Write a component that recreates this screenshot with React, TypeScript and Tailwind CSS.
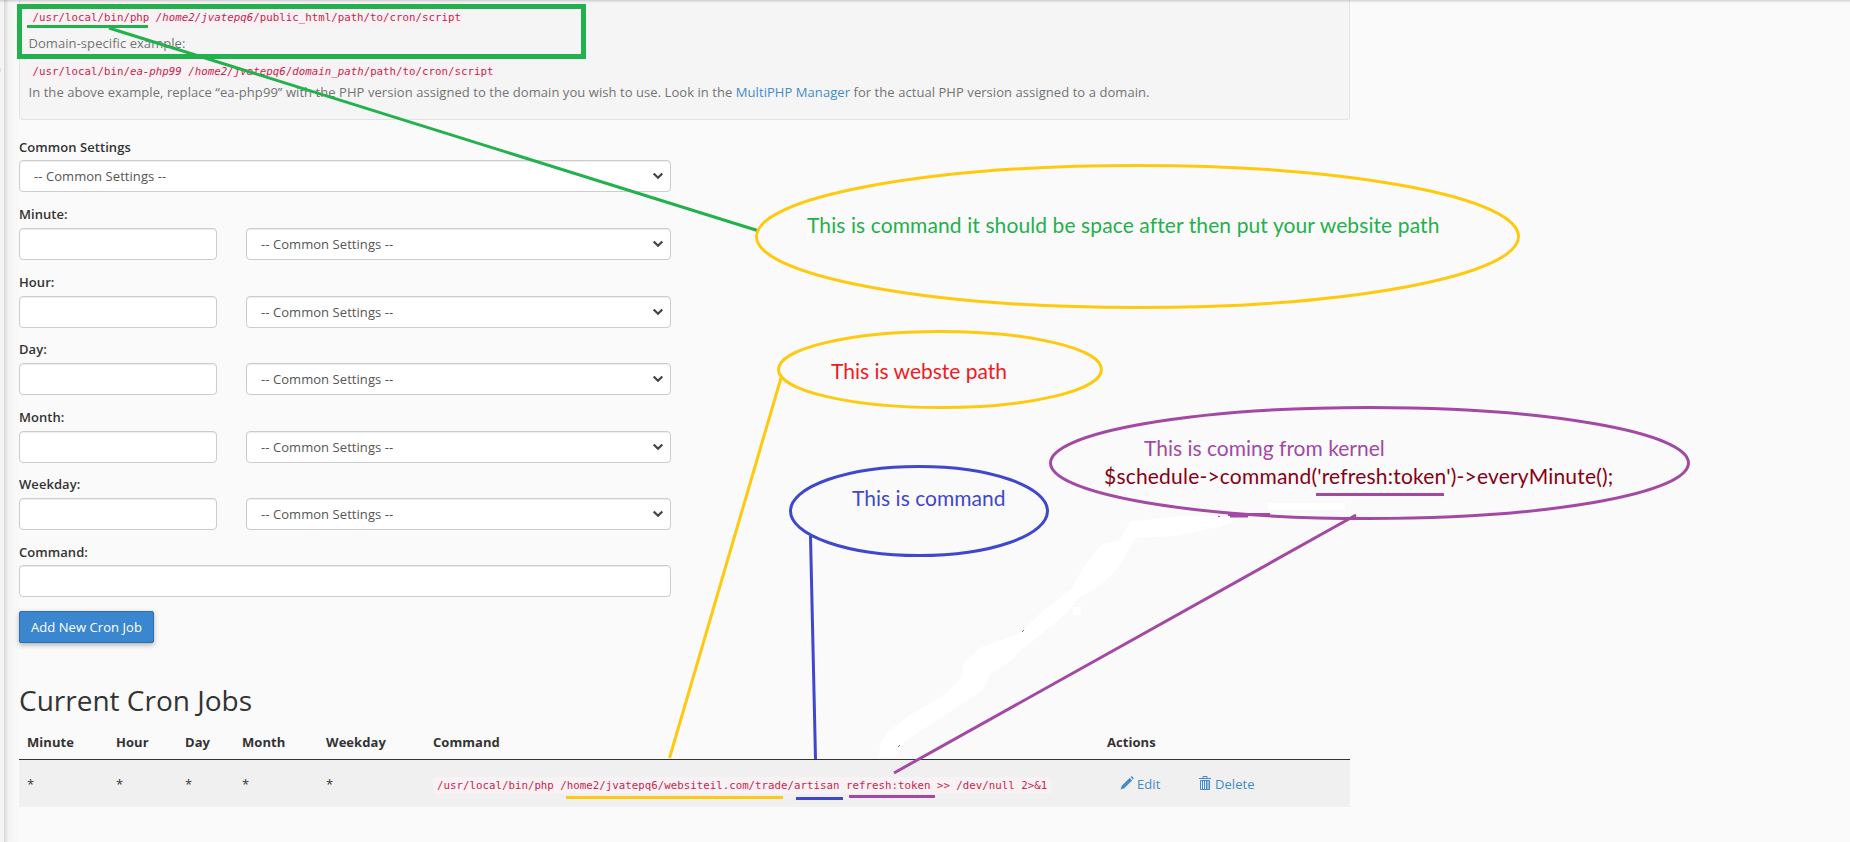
import React from 'react';

const fields = ['Minute:', 'Hour:', 'Day:', 'Month:', 'Weekday:'];

function Chevron() {
  return (
    <svg className="h-[10px] w-[12px]" viewBox="0 0 12 10" fill="none" stroke="#444" strokeWidth="2.2">
      <path d="M1.7 2.5 L6 6.8 L10.3 2.5" />
    </svg>
  );
}

function Select({ className }: { className: string }) {
  return (
    <div className={`flex h-8 items-center justify-between rounded border border-[#ccc] bg-white pr-[6px] text-[#555] shadow-[inset_0_1px_1px_rgba(0,0,0,0.075)] ${className}`}>
      <span>-- Common Settings --</span>
      <Chevron />
    </div>
  );
}

const inputClass = 'block h-8 rounded border border-[#ccc] bg-white shadow-[inset_0_1px_1px_rgba(0,0,0,0.075)] outline-none';
const codeClass = "rounded bg-[#f9f2f4] px-1 py-[2px] font-['DejaVu_Sans_Mono',monospace] text-[10.75px] leading-[15px] tracking-[0.02px] text-[#c7254e] whitespace-pre";
const noteClass = "absolute whitespace-pre font-[Lato,sans-serif] text-[21px] leading-[26px]";

export default function App() {
  return (
    <div className="relative flex h-[842px] w-[1850px] overflow-hidden bg-[#fafafa] font-['Open_Sans',sans-serif] text-[13px] leading-[18px] tracking-[0.06px] text-[#333]">
      <div className="w-1 shrink-0 bg-[#f5f5f5] pt-[68px]">
        <div className="h-1 w-px bg-[#ddd]" />
      </div>
      <div className="w-[15px] shrink-0 bg-gradient-to-r from-[#d8d8d8] via-[#f3f3f3] via-30% to-[#fafafa]" />
      <main className="w-[1331px] shrink-0">
        <section className="flex h-[120px] flex-col items-start rounded-b border border-t-0 border-[#e3e3e3] bg-[#f5f5f5] pl-[8.5px] text-[#737373]">
          <code className={`mt-[8px] ${codeClass}`}>/usr/local/bin/php <em>/home2/jvatepq6</em>/public_html/path/to/cron/script</code>
          <p className="mt-[7px]">Domain-specific example:</p>
          <code className={`mt-[10px] ${codeClass}`}>/usr/local/bin/<em>ea-php99</em> <em>/home2/jvatepq6</em>/<em>domain_path</em>/path/to/cron/script</code>
          <p className="mt-[2px]">
            In the above example, replace “ea-php99” with the PHP version assigned to the domain you wish to use. Look in the <a className="text-[#428bca]">MultiPHP Manager</a> for the actual PHP version assigned to a domain.
          </p>
        </section>

        <form className="w-[652px]">
          <label className="mt-[18px] mb-1 block font-semibold">Common Settings</label>
          <Select className="w-full pl-[14px]" />
          {fields.map((f) => (
            <div key={f} className="h-[67.5px] pt-[13px]">
              <label className="mb-[5px] block font-semibold">{f}</label>
              <div className="flex justify-between">
                <input className={`${inputClass} w-[198px]`} />
                <Select className="w-[425px] pl-[14px]" />
              </div>
            </div>
          ))}
          <label className="mt-[13.5px] mb-1 block font-semibold">Command:</label>
          <input className={`${inputClass} w-full`} />
          <button type="button" className="mt-[14px] block h-8 w-[135px] rounded-[2px] border border-[#2a6db0] bg-[#3a87cf] text-white shadow-[0_2px_5px_rgba(0,0,0,0.3)]">Add New Cron Job</button>
        </form>

        <h2 className="mt-[38px] text-[28px] leading-[38px] tracking-normal">Current Cron Jobs</h2>
        <table className="mt-[6px] w-full table-fixed border-collapse text-left">
          <colgroup>
            <col className="w-[89px]" /><col className="w-[69px]" /><col className="w-[57px]" /><col className="w-[84px]" />
            <col className="w-[107px]" /><col className="w-[674px]" /><col />
          </colgroup>
          <thead>
            <tr className="h-[34px] border-b border-[#333]">
              {['Minute', 'Hour', 'Day', 'Month', 'Weekday', 'Command', 'Actions'].map((h) => (
                <th key={h} className="pl-2 font-bold">{h}</th>
              ))}
            </tr>
          </thead>
          <tbody>
            <tr className="h-[48px] bg-[#f0f0f0]">
              {[0, 1, 2, 3, 4].map((i) => <td key={i} className="pt-[2px] pl-2">*</td>)}
              <td className="pt-[2px] pl-2"><code className={codeClass}>/usr/local/bin/php /home2/jvatepq6/websiteil.com/trade/artisan refresh:token &gt;&gt; /dev/null 2&gt;&amp;1</code></td>
              <td className="pt-[2px] pl-[21px] text-[#428bca]">
                <div className="flex items-center">
                  <svg className="mr-[3px] mb-[3px] size-[14px]" viewBox="0 0 14 14" fill="currentColor">
                    <path d="M9.6 1.9L12.1 4.4L4.2 12.2L.5 13.5L1.8 9.8ZM10.4 1.1L11.2.4Q11.7 0 12.2.5L13.5 1.8Q14 2.3 13.5 2.8L12.8 3.5Z" />
                  </svg>
                  <span className="w-[62px]">Edit</span>
                  <svg className="mr-1 mb-[3px] h-[14px] w-[12px]" viewBox="0 0 12 14" fill="none" stroke="currentColor">
                    <path d="M0 2.5H12M4 2V.5H8V2M1.5 4.5V13.5H10.5V4.5ZM3.5 5V13M5.5 5V13M7.5 5V13M9 5V13" />
                  </svg>
                  <span>Delete</span>
                </div>
              </td>
            </tr>
          </tbody>
        </table>
      </main>

      <div className="absolute inset-x-0 top-0 h-[3px] bg-gradient-to-b from-black/15 to-transparent" />

      <svg className="pointer-events-none absolute inset-0" width="1850" height="842" fill="none" strokeWidth="3">
        <g fill="#fff">
          <path d="M879 757 L880 744 L889 731 L912 714 L947 693 L961 678 L964 662 L980 648 L1020 633 L1043 611 L1072 588 L1084 566 L1102 544 L1119 541 L1130 522 L1180 516 L1231 516 L1232 523 L1200 531 L1175 536 L1135 538 L1118 568 L1107 579 L1098 587 L1078 598 L1066 614 L1040 635 L1020 651 L1012 660 L990 674 L982 691 L960 705 L930 725 L905 741 L895 757Z" />
          <path d="M1073 607H1081V615H1073ZM1268 503H1345V510H1268Z" />
        </g>
        <rect x="19.5" y="6.5" width="564" height="50" stroke="#22b14c" strokeWidth="5" />
        <path d="M27 26.5H148M109 28L759 231" stroke="#22b14c" />
        <g stroke="#ffc90e">
          <ellipse cx="1137.5" cy="236.5" rx="381" ry="71" />
          <ellipse cx="940" cy="369.5" rx="161.5" ry="38" />
          <path d="M781 378L669.5 758M566 797.5H783" />
        </g>
        <g stroke="#3f48cc">
          <ellipse cx="919" cy="511" rx="128.5" ry="44.5" />
          <path d="M810.5 536L815.5 759M796 798.5H843" />
        </g>
        <g stroke="#a349a4">
          <ellipse cx="1369.5" cy="463" rx="319" ry="55.5" />
          <path d="M1356 515L894 773M1316 494.5H1444M849 796.5H935M1228 514.5H1270M1230 516H1248" />
          <path d="M1022 632l2-2M898 747l2-2M1218 516.5h2" strokeWidth="1" />
        </g>
      </svg>
      <p className={`${noteClass} left-[807px] top-[212px] tracking-[0.1px] text-[#22b14c]`}>This is command it should be space after then put your website path</p>
      <p className={`${noteClass} left-[831px] top-[358px] tracking-normal text-[#ed1c24]`}>This is webste path</p>
      <p className={`${noteClass} left-[852px] top-[485px] tracking-[0.03px] text-[#3f48cc]`}>This is command</p>
      <p className={`${noteClass} left-[1144px] top-[435px] tracking-normal text-[#a349a4]`}>This is coming from kernel</p>
      <p className={`${noteClass} left-[1104px] top-[463px] tracking-[0.2px] text-[#880015]`}>$schedule-&gt;command('refresh:token')-&gt;everyMinute();</p>
    </div>
  );
}
